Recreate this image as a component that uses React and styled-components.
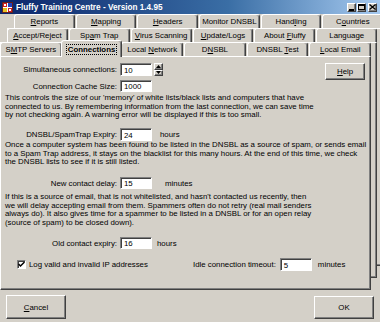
import React from 'react';
import styled, { createGlobalStyle, css } from 'styled-components';

const FONT = `"Liberation Sans", Arial, sans-serif`;
const FACE = '#d4d0c8';

const GlobalStyle = createGlobalStyle`
  html, body { margin: 0; padding: 0; background: ${FACE}; }
  body { font-family: ${FONT}; font-size: 7.85px; color: #000; }
  * { box-sizing: border-box; }
`;

const raised = css`
  background: ${FACE};
  border: 1px solid;
  border-color: #fff #404040 #404040 #fff;
  box-shadow: inset -1px -1px #808080;
`;

const sunken = css`
  background: #fff;
  border: 1px solid;
  border-color: #808080 #fff #fff #808080;
  box-shadow: inset 1px 1px #404040;
`;

const Window = styled.div`
  width: 380px;
  height: 322px;
  background: ${FACE};
  display: flex;
  flex-direction: column;
  overflow: hidden;
`;

const TitleBar = styled.div`
  height: 14px;
  flex: none;
  display: flex;
  align-items: center;
  padding: 0 3px 0 2px;
  background: linear-gradient(to right, #0a246a, #3a6ea5 60%, #a6caf0);
`;

const TitleText = styled.span`
  margin-left: 3px;
  color: #fff;
  font-weight: bold;
  font-size: 8.2px;
  white-space: nowrap;
`;

const Controls = styled.div`
  margin-left: auto;
  display: flex;
  align-items: center;
`;

const CtrlBtn = styled.div`
  ${raised};
  width: 9px;
  height: 9px;
  margin-left: ${p => p.$gap}px;
  display: flex;
  align-items: center;
  justify-content: center;
`;

const TabStack = styled.div`
  display: grid;
  height: 276px;
  flex: none;
  & > * {
    grid-area: 1 / 1;
  }
`;

const Card = styled.div`
  display: flex;
  flex-direction: column;
  margin: ${p => p.$m};
`;

const TabRow = styled.div`
  display: flex;
  gap: 1px;
  align-items: flex-end;
  height: ${p => p.$h}px;
  padding-left: ${p => p.$pad}px;
  flex: none;
`;

const Tab = styled.div`
  flex: 1 1 0;
  height: 100%;
  background: ${FACE};
  border-top: 1px solid #fff;
  border-left: 1px solid #fff;
  border-right: 1px solid #404040;
  box-shadow: inset -1px 0 #808080;
  border-radius: 3px 3px 0 0;
  display: flex;
  align-items: center;
  justify-content: center;
  white-space: nowrap;
  ${p =>
    p.$active &&
    css`
      height: calc(100% + 3px);
      margin: 0 -2px -1px;
      position: relative;
      z-index: 1;
      font-weight: bold;
    `}
`;

const Focus = styled.span`
  outline: 1px dotted #000;
  outline-offset: 0;
  padding: 0 1px;
`;

const Body = styled.div`
  flex: 1;
  ${raised};
  display: flex;
  flex-direction: column;
  padding: ${p => (p.$content ? '6px 4px 0 4px' : '0')};
`;

const U = styled.span`
  text-decoration: underline;
`;

const TopSection = styled.div`
  display: flex;
  align-items: flex-start;
`;

const FieldsCol = styled.div`
  display: flex;
  flex-direction: column;
`;

const FieldRow = styled.div`
  display: flex;
  align-items: center;
  margin-top: ${p => p.$mt || 0}px;
  height: ${p => p.$h || 13}px;
  flex: none;
`;

const Label = styled.span`
  width: 112px;
  flex: none;
  text-align: right;
  white-space: nowrap;
`;

const Input = styled.div`
  ${sunken};
  width: 32px;
  height: 100%;
  margin-left: ${p => p.$ml ?? 3}px;
  padding: 1px 0 0 3px;
  display: flex;
  align-items: center;
  flex: none;
`;

const Unit = styled.span`
  margin-left: ${p => p.$gap}px;
  white-space: nowrap;
`;

const Spin = styled.div`
  display: flex;
  flex-direction: column;
  width: 9px;
  height: 13px;
  margin-left: 2px;
`;

const SpinBtn = styled.div`
  ${raised};
  flex: 1;
  display: flex;
  align-items: center;
  justify-content: center;
`;

const Button = styled.button`
  ${raised};
  width: ${p => p.$w}px;
  height: ${p => p.$h}px;
  margin-top: ${p => p.$mt || 0}px;
  font: inherit;
  color: #000;
  padding: 0;
  display: flex;
  align-items: center;
  justify-content: center;
`;

const HelpButton = styled(Button)`
  margin-left: auto;
  margin-right: 1px;
`;

const Para = styled.div`
  margin-top: ${p => p.$mt}px;
  line-height: 8.5px;
`;

const Line = styled.span`
  display: block;
  white-space: nowrap;
`;

const OptionsRow = styled.div`
  display: flex;
  align-items: center;
  margin-top: 9px;
  height: 13px;
`;

const CheckLabel = styled.div`
  display: flex;
  align-items: center;
  gap: 3px;
  margin-left: 12px;
  width: 176px;
  flex: none;
  white-space: nowrap;
`;

const Check = styled.div`
  ${sunken};
  width: 9px;
  height: 9px;
  display: flex;
  align-items: center;
  justify-content: center;
`;

const Footer = styled.div`
  display: flex;
  justify-content: space-between;
  align-items: flex-start;
  padding: 5px 6px 0 6px;
`;

function Acc({ text, k }) {
  if (k < 0 || k === undefined) return <>{text}</>;
  return (
    <>
      {text.slice(0, k)}
      <U>{text[k]}</U>
      {text.slice(k + 1)}
    </>
  );
}

const row1 = [
  ['Reports', 0],
  ['Mapping', 0],
  ['Headers', 0],
  ['Monitor DNSBL', -1],
  ['Handling', 4],
  ['Countries', 1],
];
const row2 = [
  ['Accept/Reject', 0],
  ['Spam Trap', 2],
  ['Virus Scanning', 0],
  ['Update/Logs', 0],
  ['About Fluffy', 6],
  ['Language', -1],
];
const row3 = [
  ['SMTP Servers', 1],
  ['Connections', -1, true],
  ['Local Network', 6],
  ['DNSBL', 1],
  ['DNSBL Test', 6],
  ['Local Email', 0],
];

function Tabs({ items }) {
  return items.map(([t, k, active]) => (
    <Tab key={t} $active={active}>
      {active ? (
        <Focus>{t}</Focus>
      ) : (
        <span>
          <Acc text={t} k={k} />
        </span>
      )}
    </Tab>
  ));
}

function AppIcon() {
  return (
    <svg width="11" height="11" viewBox="0 0 11 11">
      <rect x="0" y="0" width="11" height="11" fill="#fff" />
      <rect x="0" y="0" width="5" height="5" fill="#d02020" />
      <rect x="6" y="0" width="5" height="5" fill="#2040c0" />
      <rect x="0" y="6" width="5" height="5" fill="#e8c020" />
      <rect x="6" y="6" width="5" height="5" fill="#d02020" />
      <rect x="2" y="2" width="2" height="2" fill="#fff" />
      <rect x="7" y="7" width="2" height="2" fill="#fff" />
      <rect x="0.5" y="0.5" width="10" height="10" fill="none" stroke="#602020" strokeWidth="1" />
    </svg>
  );
}

function Arrow({ up }) {
  return (
    <svg width="5" height="3" viewBox="0 0 5 3">
      <polygon points={up ? '2.5,0 5,3 0,3' : '0,0 5,0 2.5,3'} fill="#000" />
    </svg>
  );
}

export default function App() {
  return (
    <>
      <GlobalStyle />
      <Window>
        <TitleBar>
          <AppIcon />
          <TitleText>Fluffy Training Centre - Version 1.4.95</TitleText>
          <Controls>
            <CtrlBtn $gap={0}>
              <svg width="5" height="7" viewBox="0 0 5 7">
                <rect x="0" y="5" width="5" height="2" fill="#000" />
              </svg>
            </CtrlBtn>
            <CtrlBtn $gap={1}>
              <svg width="7" height="6" viewBox="0 0 7 6">
                <rect x="0.5" y="0.5" width="6" height="5" fill="none" stroke="#000" />
                <rect x="0" y="0" width="7" height="2" fill="#000" />
              </svg>
            </CtrlBtn>
            <CtrlBtn $gap={2}>
              <svg width="7" height="6" viewBox="0 0 7 6">
                <path d="M0.5 0.5 L6.5 5.5 M6.5 0.5 L0.5 5.5" stroke="#000" strokeWidth="1.3" />
              </svg>
            </CtrlBtn>
          </Controls>
        </TitleBar>

        <TabStack>
          <Card $m="0 2px 24px 7px">
            <TabRow $h={14} $pad={7}>
              <Tabs items={row1} />
            </TabRow>
            <Body />
          </Card>
          <Card $m="14px 8px 12px 0">
            <TabRow $h={14} $pad={7}>
              <Tabs items={row2} />
            </TabRow>
            <Body />
          </Card>
          <Card $m="28px 14px 0 0">
            <TabRow $h={14} $pad={0}>
              <Tabs items={row3} />
            </TabRow>
            <Body $content>
              <TopSection>
                <FieldsCol>
                  <FieldRow $h={13}>
                    <Label>Simultaneous connections:</Label>
                    <Input>10</Input>
                    <Spin>
                      <SpinBtn>
                        <Arrow up />
                      </SpinBtn>
                      <SpinBtn>
                        <Arrow />
                      </SpinBtn>
                    </Spin>
                  </FieldRow>
                  <FieldRow $h={12} $mt={4}>
                    <Label>Connection Cache Size:</Label>
                    <Input>1000</Input>
                  </FieldRow>
                </FieldsCol>
                <HelpButton $w={40} $h={17}>
                  <span>
                    <U>H</U>elp
                  </span>
                </HelpButton>
              </TopSection>

              <Para $mt={2}>
                <Line>This controls the size of our 'memory' of white lists/black lists and computers that have</Line>
                <Line>connected to us. By remembering information from the last connection, we can save time</Line>
                <Line>by not checking again. A warning error will be displayed if this is too small.</Line>
              </Para>

              <FieldRow $h={13} $mt={8.5}>
                <Label>DNSBL/SpamTrap Expiry:</Label>
                <Input>24</Input>
                <Unit $gap={8}>hours</Unit>
              </FieldRow>

              <Para $mt={0}>
                <Line>Once a computer system has been found to be listed in the DNSBL as a source of spam, or sends email</Line>
                <Line>to a Spam Trap address, it stays on the blacklist for this many hours. At the end of this time, we check</Line>
                <Line>the DNSBL lists to see if it is still listed.</Line>
              </Para>

              <FieldRow $h={12} $mt={10.5}>
                <Label>New contact delay:</Label>
                <Input>15</Input>
                <Unit $gap={13}>minutes</Unit>
              </FieldRow>

              <Para $mt={4}>
                <Line>If this is a source of email, that is not whitelisted, and hasn't contacted us recently, then</Line>
                <Line>we will delay accepting email from them. Spammers often do not retry (real mail senders</Line>
                <Line>always do). It also gives time for a spammer to be listed in a DNSBL or for an open relay</Line>
                <Line>(source of spam) to be closed down).</Line>
              </Para>

              <FieldRow $h={12} $mt={10}>
                <Label>Old contact expiry:</Label>
                <Input>16</Input>
                <Unit $gap={5}>hours</Unit>
              </FieldRow>

              <OptionsRow>
                <CheckLabel>
                  <Check>
                    <svg width="7" height="7" viewBox="0 0 7 7">
                      <path d="M0.5 3 L2.5 5 L6.5 1" fill="none" stroke="#000" strokeWidth="1.5" />
                    </svg>
                  </Check>
                  <span>Log valid and invalid IP addresses</span>
                </CheckLabel>
                <span>Idle connection timeout:</span>
                <Input $ml={4}>5</Input>
                <Unit $gap={6}>minutes</Unit>
              </OptionsRow>
            </Body>
          </Card>
        </TabStack>

        <Footer>
          <Button $w={60} $h={24}>
            <span>
              <U>C</U>ancel
            </span>
          </Button>
          <Button $w={60} $h={23} $mt={1}>
            OK
          </Button>
        </Footer>
      </Window>
    </>
  );
}
